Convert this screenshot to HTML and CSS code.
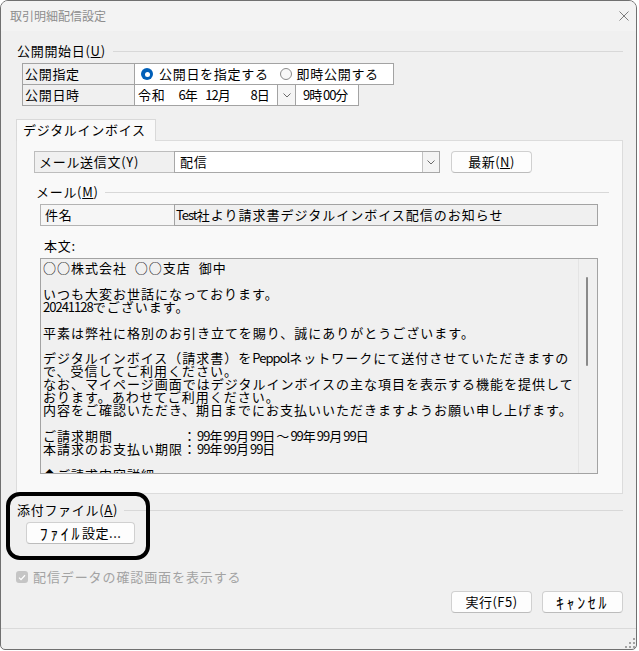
FILE: index.html
```html
<!DOCTYPE html>
<html lang="ja">
<head>
<meta charset="utf-8">
<title>取引明細配信設定</title>
<link rel="stylesheet" href="styles.css">
</head>
<body>
<div class="window">
  <div class="titlebar">
    <span class="title">取引明細配信設定</span>
    <svg class="close" width="10" height="10" viewBox="0 0 10 10"><path d="M0.5 0.5L9.5 9.5M9.5 0.5L0.5 9.5" stroke="#7d7d7d" stroke-width="1" fill="none"/></svg>
  </div>
  <div class="client">
    <div class="ghead g1"><span class="legend">公開開始日(<u>U</u>)</span><span class="rule"></span></div>
    <div class="ptable">
      <div class="prow">
        <div class="pcell plabel">公開指定</div>
        <div class="pcell pradio">
          <span class="radio on"></span><span class="rlabel">公開日を指定する</span>
          <span class="radio off"></span><span class="rlabel r2">即時公開する</span>
        </div>
      </div>
      <div class="prow">
        <div class="pcell plabel">公開日時</div>
        <div class="pcell pdate"><span>令和</span><span class="d-y"><span class="hw">6</span>年</span><span class="d-m"><span class="hw">12</span>月</span><span class="d-d"><span class="hw">8</span>日</span></div>
        <div class="pcell pdrop"><svg width="8" height="5" viewBox="0 0 8 5"><path d="M0.5 0.5L4 4L7.5 0.5" stroke="#6a6a6a" fill="none"/></svg></div>
        <div class="pcell ptime"><span class="hw">9</span>時<span class="hw">00</span>分</div>
      </div>
    </div>

    <div class="tabs"><div class="tab">デジタルインボイス</div></div>
    <div class="panel">
      <div class="mrow">
        <div class="mlabel">メール送信文(Y)</div>
        <div class="mcombo">
          <span class="val">配信</span>
          <span class="dd"><svg width="8" height="5" viewBox="0 0 8 5"><path d="M0.5 0.5L4 4L7.5 0.5" stroke="#6a6a6a" fill="none"/></svg></span>
        </div>
        <button class="btn btn-refresh">最新(<u>N</u>)</button>
      </div>
      <div class="ghead g2"><span class="legend">メール(<u>M</u>)</span><span class="rule"></span></div>
      <div class="subj">
        <div class="slabel">件名</div>
        <div class="sval"><span class="hw">Test</span>社より請求書デジタルインボイス配信のお知らせ</div>
      </div>
      <div class="honbun">本文:</div>
      <div class="textarea">
        <div class="bodytext">○○株式会社  ○○支店  御中

いつも大変お世話になっております。
<span class="hw">20241128</span>でございます。

平素は弊社に格別のお引き立てを賜り、誠にありがとうございます。

デジタルインボイス（請求書）を<span class="hw">Peppol</span>ネットワークにて送付させていただきますの
で、受信してご利用ください。
なお、マイページ画面ではデジタルインボイスの主な項目を表示する機能を提供して
おります。あわせてご利用ください。
内容をご確認いただき、期日までにお支払いいただきますようお願い申し上げます。

ご請求期間　　　　　：<span class="hw">99</span>年<span class="hw">99</span>月<span class="hw">99</span>日～<span class="hw">99</span>年<span class="hw">99</span>月<span class="hw">99</span>日
本請求のお支払い期限：<span class="hw">99</span>年<span class="hw">99</span>月<span class="hw">99</span>日

◆ご請求内容詳細</div>
        <div class="vscroll"><div class="thumb"></div></div>
      </div>
    </div>

    <div class="ghead g3"><span class="legend">添付ファイル(<u>A</u>)</span><span class="rule"></span></div>
    <button class="btn btn-file"><span class="hk">ﾌｧｲﾙ</span>設定...</button>

    <div class="check">
      <span class="cbox"><svg width="8" height="7" viewBox="0 0 8 7"><path d="M1 3.6L3 5.6L7 1.2" stroke="#ffffff" stroke-width="1.3" fill="none"/></svg></span>
      <span class="ctext">配信データの確認画面を表示する</span>
    </div>

    <div class="actions">
      <button class="btn">実行(F5)</button>
      <button class="btn"><span class="hk">ｷｬﾝｾﾙ</span></button>
    </div>
  </div>
  <div class="statusbar">
    <svg class="grip" width="10" height="10" viewBox="0 0 10 10">
      <rect x="8" y="0" width="2" height="2" fill="#a3a3a3"/>
      <rect x="4" y="4" width="2" height="2" fill="#a3a3a3"/>
      <rect x="8" y="4" width="2" height="2" fill="#a3a3a3"/>
      <rect x="0" y="8" width="2" height="2" fill="#a3a3a3"/>
      <rect x="4" y="8" width="2" height="2" fill="#a3a3a3"/>
      <rect x="8" y="8" width="2" height="2" fill="#a3a3a3"/>
    </svg>
  </div>
  <div class="annot"></div>
</div>
</body>
</html>
```
FILE: styles.css
```css
* { box-sizing: border-box; }
html, body { margin: 0; padding: 0; }
body {
  background: #ffffff;
  font-family: "Noto Sans CJK JP", "Noto Sans", sans-serif;
  font-size: 13px;
  color: #000;
}

.window {
  position: relative;
  width: 637px;
  height: 650px;
  border: 1px solid #707070;
  border-radius: 8px 8px 5px 5px;
  background: #f0f0f0;
  display: flex;
  flex-direction: column;
  overflow: hidden;
}

.titlebar {
  height: 30px;
  flex: none;
  background: #f3f3f3;
  display: flex;
  align-items: center;
  padding: 0 7px 0 9px;
}
.title { flex: 1; font-size: 12px; line-height: 16px; color: #8d8d8d; }
.close { flex: none; }

.client {
  flex: 1;
  display: flex;
  flex-direction: column;
  padding: 0 13px 0 16px;
}

.ghead {
  display: flex;
  align-items: center;
  height: 16px;
  line-height: 16px;
  letter-spacing: 0.7px;
  flex: none;
}
.ghead .rule { flex: 1; height: 1px; background: #d8d8d8; margin-left: 6px; }
.g1 { margin-top: 12px; }
.g1 .rule { margin-left: 7px; }
.g2 { margin: 11px 0 0 2px; }
.g2 .rule { margin-right: -11px; }
.g3 { margin-top: 8px; }

.hw { font-size: 13px; letter-spacing: -1px; }
.hk { letter-spacing: 2.6px; font-size: 16px; line-height: 16px; }

/* publish table */
.ptable { margin: 4px 0 0 5px; display: flex; flex-direction: column; }
.prow { display: flex; height: 22px; }
.prow + .prow { margin-top: -1px; }
.pcell {
  height: 22px;
  border: 1px solid #a3a3a3;
  display: flex;
  align-items: center;
  line-height: 16px;
  letter-spacing: 0.7px;
  white-space: nowrap;
}
.pcell + .pcell { margin-left: -1px; }
.plabel { width: 113px; padding-left: 2px; background: #f0f0f0; }
.pradio { width: 260px; padding-left: 6px; background: #ffffff; }
.radio { width: 12px; height: 12px; border-radius: 50%; flex: none; }
.radio.on {
  background: #005fb8;
  display: flex;
  align-items: center;
  justify-content: center;
}
.radio.on::after { content: ""; width: 5px; height: 5px; border-radius: 50%; background: #ffffff; }
.radio.off { border: 1px solid #8a8a8a; background: #f8f8f8; margin-left: 11px; }
.rlabel { margin-left: 6px; }
.rlabel.r2 { margin-left: 5px; }

.pdate { width: 144px; padding-left: 3px; background: #ffffff; }
.d-y { margin-left: 13px; }
.d-m { margin-left: 7px; }
.d-d { margin-left: 19px; }
.pdrop { width: 19px; background: #f5f5f5; justify-content: center; }
.ptime { width: 64px; padding-left: 7px; background: #ffffff; }

/* tab */
.tabs { display: flex; margin: 13px 0 -1px -1px; position: relative; z-index: 1; flex: none; }
.tab {
  width: 140px;
  height: 22px;
  border: 1px solid #d9d9d9;
  border-bottom: none;
  background: #f9f9f9;
  padding: 0 0 1px 6px;
  display: flex;
  align-items: center;
  letter-spacing: 0.7px;
  line-height: 16px;
}
.panel {
  margin-left: -1px;
  border: 1px solid #dcdcdc;
  background: #f9f9f9;
  padding: 10px 24px 19px 17px;
  display: flex;
  flex-direction: column;
  flex: none;
}

.mrow { display: flex; align-items: center; height: 22px; }
.mlabel {
  width: 141px;
  height: 22px;
  border: 1px solid #bdbdbd;
  background: #f0f0f0;
  padding-left: 4px;
  display: flex;
  align-items: center;
  letter-spacing: 0.7px;
  line-height: 16px;
}
.mcombo {
  width: 266px;
  height: 22px;
  margin-left: -1px;
  border: 1px solid #a8a8a8;
  background: #ffffff;
  display: flex;
}
.mcombo .val { flex: 1; padding-left: 5px; display: flex; align-items: center; line-height: 16px; letter-spacing: 0.7px; }
.mcombo .dd {
  width: 17px;
  border-left: 1px solid #c2c2c2;
  background: #f4f4f4;
  display: flex;
  align-items: center;
  justify-content: center;
}

.btn {
  width: 81px;
  height: 22px;
  padding: 0;
  border: 1px solid #d0d0d0;
  border-bottom-color: #bcbcbc;
  border-radius: 4px;
  background: #fdfdfd;
  font-family: inherit;
  font-size: 13px;
  line-height: 16px;
  color: #000;
  letter-spacing: 0.5px;
  display: flex;
  align-items: center;
  justify-content: center;
  flex: none;
}
.btn-refresh { margin-left: 11px; }

.subj { display: flex; height: 22px; margin: 4px 0 0 6px; }
.slabel {
  width: 135px;
  border: 1px solid #b3b3b3;
  background: #f6f6f6;
  padding-left: 4px;
  display: flex;
  align-items: center;
  letter-spacing: 0.7px;
  line-height: 16px;
}
.sval {
  flex: 1;
  margin-left: -1px;
  border: 1px solid #a3a3a3;
  background: #f0f0f0;
  padding-left: 1px;
  display: flex;
  align-items: center;
  letter-spacing: 1px;
  line-height: 16px;
  white-space: nowrap;
  overflow: hidden;
}

.honbun { margin: 12px 0 0 10px; height: 16px; line-height: 16px; letter-spacing: 0.7px; }

.textarea {
  margin: 4px 0 0 6px;
  height: 216px;
  border: 1px solid #a3a3a3;
  background: #f0f0f0;
  display: flex;
  overflow: hidden;
}
.bodytext {
  flex: 1;
  padding: 3px 0 0 2px;
  white-space: pre;
  overflow: hidden;
  font-size: 13px;
  letter-spacing: 1px;
  line-height: 12.9px;
}
.vscroll {
  width: 19px;
  flex: none;
  border-left: 1px solid #e4e4e4;
  padding: 18px 0 0 7px;
}
.thumb { width: 2px; height: 89px; border-radius: 1px; background: #8a8a8a; }

.btn-file { width: 109px; margin: 4px 0 0 9px; align-self: flex-start; }

.check { display: flex; align-items: center; height: 16px; margin: 25px 0 0 -1px; }
.cbox {
  width: 12px;
  height: 12px;
  border-radius: 3px;
  background: #c5c5c5;
  display: flex;
  align-items: center;
  justify-content: center;
  flex: none;
}
.ctext { margin-left: 5px; color: #a3a3a3; letter-spacing: 0.9px; line-height: 16px; }

.actions { display: flex; justify-content: flex-end; gap: 10px; margin-top: 6px; }

.statusbar {
  height: 21px;
  flex: none;
  border-top: 1px solid #dadada;
  display: flex;
  justify-content: flex-end;
  align-items: flex-end;
  padding: 0 1px 1px 0;
}

.annot {
  position: absolute;
  left: 5px;
  top: 491px;
  width: 144px;
  height: 68px;
  border: 4px solid #000000;
  border-radius: 14px;
  pointer-events: none;
}
```
